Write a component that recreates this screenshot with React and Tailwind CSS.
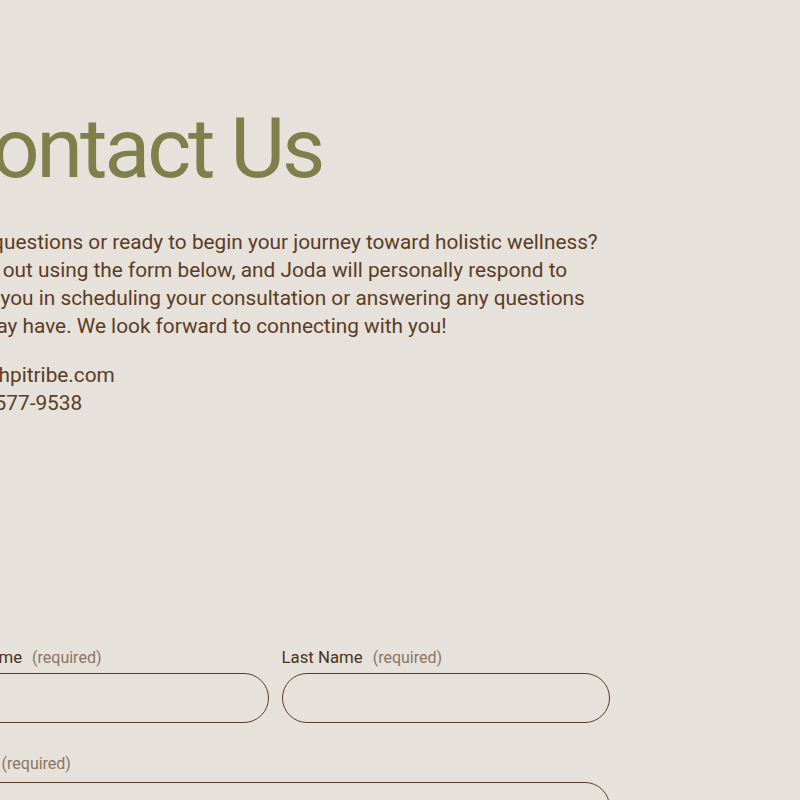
export default function App() {
  const font = { fontFamily: "Roboto, 'Liberation Sans', sans-serif" };
  return (
    <div className="min-h-[800px] w-[800px] overflow-hidden bg-[#e6e1da]" style={font}>
      <div className="ml-[-60px] w-[670px] pt-[107px]">
        <h1 className="text-[84px] leading-none font-normal text-[#807e4b] tracking-[-3px]">Contact Us</h1>
        <p className="mt-[37px] w-[720px] text-[20.8px] leading-[28px] text-[#5b3c25]">
          Have questions or ready to begin your journey toward holistic wellness?<br />
          Reach out using the form below, and Joda will personally respond to<br />
          assist you in scheduling your consultation or answering any questions<br />
          you may have. We look forward to connecting with you!
        </p>
        <div className="mt-[21px] text-[20.8px] leading-[28px] text-[#5b3c25]">
          <div>joda@hpitribe.com</div>
          <div>(720) 577-9538</div>
        </div>
        <form className="mt-[230px]">
          <div className="grid grid-cols-2 gap-x-[13px]">
            <div className="flex flex-col">
              <label className="flex items-baseline leading-[20px]">
                <span className="text-[16.8px] text-[#4a3222]">First Name</span>
                <span className="ml-[10px] text-[16px] text-[#8c7565]">(required)</span>
              </label>
              <input type="text" className="mt-[5px] h-[50px] rounded-full border border-[#5b3c25] bg-transparent" />
            </div>
            <div className="flex flex-col">
              <label className="flex items-baseline leading-[20px]">
                <span className="text-[16.8px] text-[#4a3222]">Last Name</span>
                <span className="ml-[10px] text-[16px] text-[#8c7565]">(required)</span>
              </label>
              <input type="text" className="mt-[5px] h-[50px] rounded-full border border-[#5b3c25] bg-transparent" />
            </div>
          </div>
          <div className="mt-[30px] flex flex-col">
            <label className="flex items-baseline leading-[20px]">
              <span className="text-[16.8px] text-[#4a3222]">Email</span>
              <span className="ml-[20px] text-[16px] text-[#8c7565]">(required)</span>
            </label>
            <input type="email" className="mt-[8px] h-[50px] rounded-full border border-[#5b3c25] bg-transparent" />
          </div>
        </form>
      </div>
    </div>
  );
}
